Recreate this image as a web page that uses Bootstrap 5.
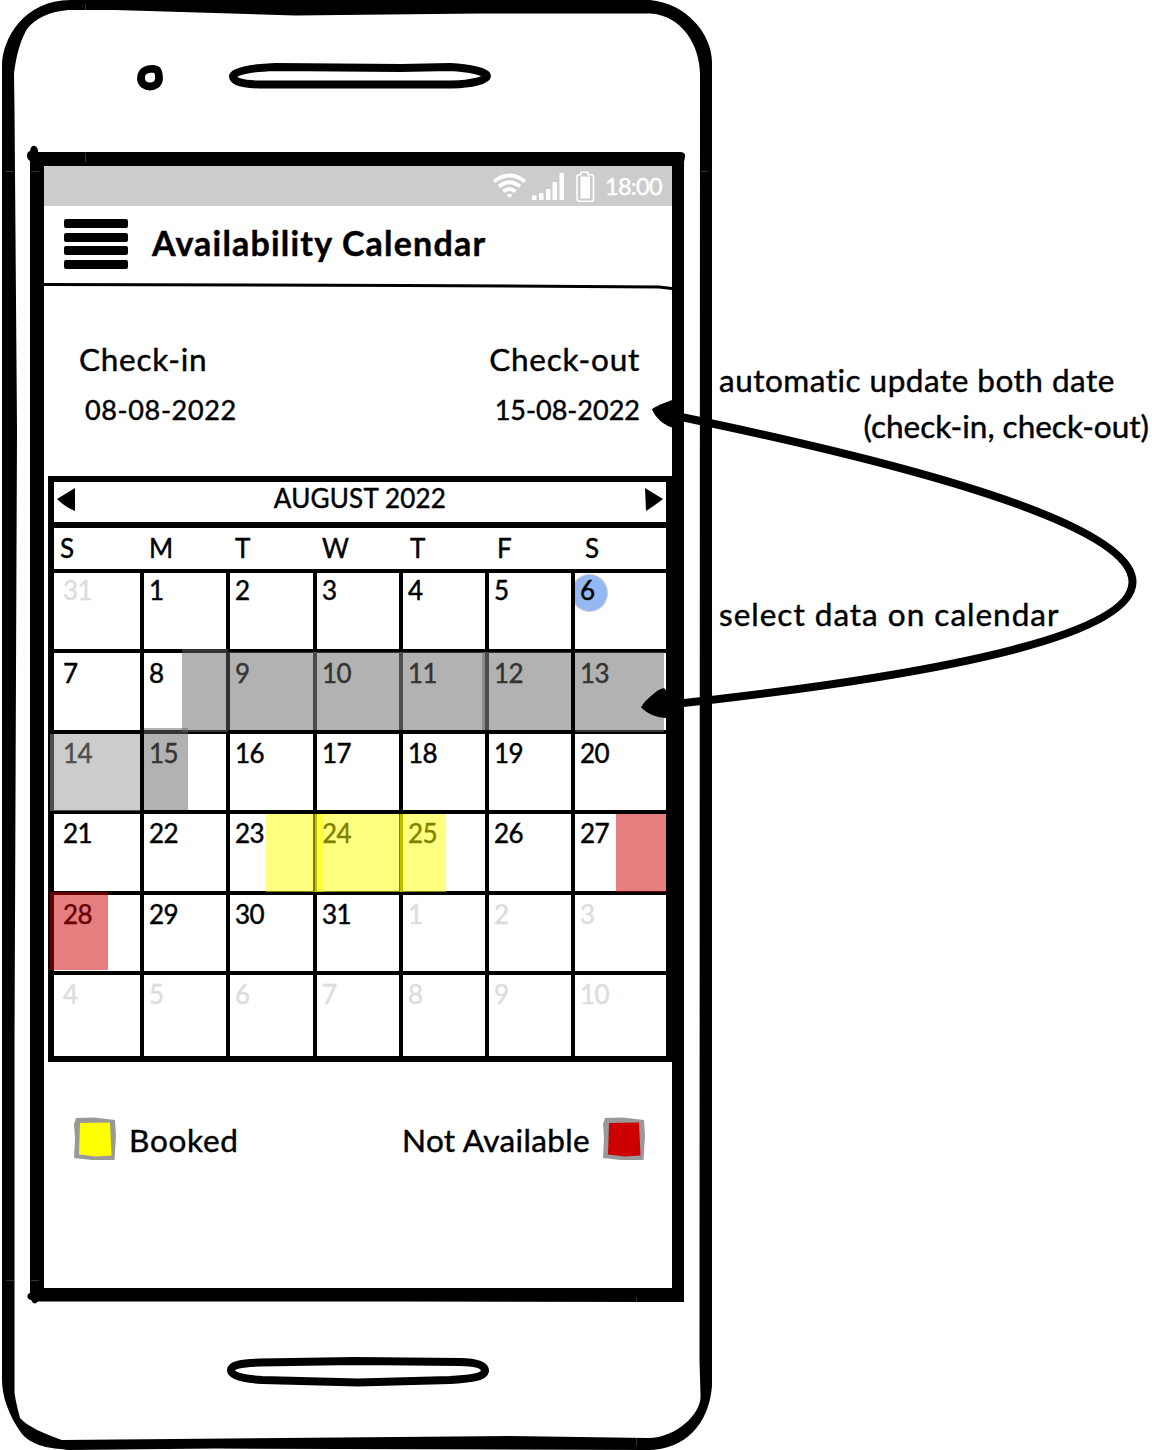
<!DOCTYPE html>
<html lang="en">
<head>
<meta charset="utf-8">
<meta name="viewport" content="width=device-width, initial-scale=1">
<title>Availability Calendar</title>
<link href="https://cdn.jsdelivr.net/npm/bootstrap@5.3.0/dist/css/bootstrap.min.css" rel="stylesheet">
<style>
  body { font-family: Lato, "Open Sans", sans-serif; color: #000; background: #fff; overflow: hidden; font-variant-ligatures: none; -webkit-text-stroke: .45px currentColor; }
  .stage { width: 1152px; height: 1450px; }
  .outline-art, .arrow-art { left: 0; top: 0; pointer-events: none; }
  .phone { width: 712px; height: 1450px; padding: 166px 40px 162px 44px; }
  .screen { height: 1122px; }
  .statusbar { height: 40px; background: #ccc; color: #fff; padding-right: 11px; }
  .clock { font-size: 23.5px; line-height: 40px; margin-left: 10px; width: 56px; letter-spacing: -.7px; }
  .titlebar { height: 118px; padding: 13px 0 0 20px; }
  .menu-bars { width: 64px; height: 50px; margin-right: 24px; }
  .menu-bars span { height: 8.8px; border-radius: 2px; background: #000; }
  .title-text { font-size: 34px; font-weight: 700; line-height: 48px; margin: 0; letter-spacing: 1.2px; }
  .txt { font-size: 31.5px; line-height: 40px; white-space: nowrap; letter-spacing: .75px; }
  .date-text { font-size: 27px; line-height: 40px; white-space: nowrap; }
  .date-in { letter-spacing: .65px; padding-left: 6px; }
  .stay { height: 152px; padding: 15px 32px 0 35px; }
  .stay .date-text { margin-top: 11px; }
  .cal { width: 624px; height: 586px; margin-left: 4px; border: 6px solid #000; background: #000; font-size: 26px; }
  .cal-head { height: 40px; background: #fff; padding: 0 3px; }
  .cal-head svg { margin-bottom: 4px; }
  .cal-head .month { line-height: 32px; height: 40px; white-space: nowrap; letter-spacing: .2px; }
  .weekdays { height: 41px; margin-top: 6px; background: #fff; line-height: 40px; }
  .cols { display: grid; grid-template-columns: 86px 82px 83px 82px 82px 82px 91px; column-gap: 4px; }
  .weekdays > div { padding-left: 5px; }
  .weekdays > div:first-child { padding-left: 6px; }
  .weekdays > div:nth-child(5) { padding-left: 7px; }
  .weekdays > div:nth-child(6) { padding-left: 8px; }
  .weekdays > div:nth-child(7) { padding-left: 10px; }
  .days { margin-top: 4px; grid-template-rows: 76px 77px 76px 77px 76px 81px; row-gap: 4px; }
  .days > div { background: #fff; padding-left: 5px; line-height: 38px; position: relative; letter-spacing: -.5px; }
  .days > div:nth-child(7n+1) { padding-left: 9px; }
  .days > div:nth-child(-n+7) { line-height: 34px; }
  .days > div:nth-child(n+8):nth-child(-n+14) { line-height: 40px; }
  .days > .off { color: #ddd; }
  .today { overflow: hidden; }
  .today::before { content: ""; position: absolute; left: -4px; top: 1px; width: 37px; height: 38px; border: 1.5px solid #ccc; border-radius: 50%; background: #94b9f2; }
  .today span { position: relative; }
  .span-mark { position: absolute; opacity: .5; left: var(--x); top: var(--y); width: var(--w); height: var(--h); }
  .g6 { background: #666; } .g9 { background: #999; } .yl { background: #ff0; } .rd { background: #c00; }
  .legend { height: 44px; margin: 54px 26px 0 30px; }
  .legend .txt { padding-top: 3px; }
  .booked { padding-left: 4px; }
  .notav { letter-spacing: .35px; padding-right: 5px; }
  .notes { padding: 360px 0 0 7px; width: 440px; }
  .note-a { letter-spacing: .5px; }
  .note-b { letter-spacing: 0; padding: 6px 3px 0 0; }
  .note-c { letter-spacing: 1px; margin-top: 148px; }
</style>
</head>
<body>
<div class="stage position-relative d-flex">
  <svg class="outline-art position-absolute" width="712" height="1450" viewBox="0 0 712 1450">
    <path fill-rule="evenodd" d="M2 66C2 38 25 0 70 0H650C686 3 712 34 712 62V1386C709 1424 685 1450 648 1450L215 1448.500L68 1450C56 1448 36 1449 22 1434C8 1415 2 1395 2 1380ZM14 74C17 50 22 38 27 29C36 18 48 12 68 10H115L295 15.500L480 13.500H650C682 15 700 46 700 74L699.500 1360L700.500 1395C702 1412 678 1438 648 1438L510 1436L340 1437.500L62 1440C45 1434 28 1427 20 1418C18 1410 16 1403 14.500 1393L14.500 1040L17 430L14.500 110Z"/>
    <path fill-rule="evenodd" d="M30 152H680Q686 152 685 157L684 162V1302H660L400 1301.500H38Q34 1306 31 1300Q26 1299 28 1294L30 1293V161Q25 158 28 152L30 151Q31 145 35 146Q38 147 38 152ZM44 166V1288H672V166Z"/>
    <path d="M150 69C142 70 141 74 141 79C142 89 158 89 159 79C159 70 157 68 150 69Z" fill="none" stroke="#000" stroke-width="7.800"/>
    <path d="M275 67L401 68L450 67C470 68 487 72 487 76C487 80 472 84 452 84.500H260C240 84.500 233 81 233 76C234 71 250 68 275 67Z" fill="none" stroke="#000" stroke-width="8"/>
    <path d="M260 1362.500L355 1361L460 1362C477 1362.500 485 1365 485 1371C484 1377 470 1379 450 1380L358 1382.500L262 1380C243 1379 231 1376 231 1370C231 1365 241 1363 260 1362.500Z" fill="none" stroke="#000" stroke-width="8"/>
    <path stroke="#555" stroke-width=".6" d="M6 171.500H14M31 171.500H39M701 171.500H708M6 1280.500H14M31 1280.500H39M85.500 4V10M85.500 153V162M636.500 1297V1302M636.500 1438V1446"/>
  </svg>

  <main class="phone flex-shrink-0">
    <div class="screen d-flex flex-column position-relative">
      <div class="statusbar d-flex align-items-center justify-content-end">
        <svg width="103" height="40" viewBox="0 0 103 40" fill="none">
          <g stroke="#fff" stroke-width="4"><path d="M2 15.500Q17.500 3.500 33 15.500"/><path d="M7 20.500Q17.500 12 28 20.500"/><path d="M11.500 25.500Q17.500 20.500 23.500 25.500"/></g>
          <path d="M14.500 29Q17.500 26.500 20.500 29L17.500 32Z" fill="#fff"/>
          <path d="M40 29.500h4.500V34H40zM47 27h4.500v7H47zM54 23h4.500v11H54zM60.500 16H65v18h-4.500zM67.500 7H72v27h-4.500z" fill="#fff"/>
          <path d="M86 8.500h3.500V6h7v2.500H100q2 0 2 2v22.500q0 2-2 2H88q-2.500 0-2.500-2V10.500q0-2 2-2z" transform="translate(-.5 .2)" stroke="#fff" stroke-width="1.600"/>
          <path d="M88.500 10.500h9.500v22h-9.500z" fill="#fff"/>
        </svg>
        <span class="clock">18:00</span>
      </div>
      <header class="titlebar d-flex align-items-start">
        <div class="menu-bars d-flex flex-column justify-content-between"><span></span><span></span><span></span><span></span></div>
        <h1 class="title-text">Availability Calendar</h1>
      </header>
      <section class="stay d-flex justify-content-between">
        <div><div class="txt">Check-in</div><div class="date-text date-in">08-08-2022</div></div>
        <div class="text-end"><div class="txt">Check-out</div><div class="date-text">15-08-2022</div></div>
      </section>
      <section class="cal position-relative flex-shrink-0">
        <div class="cal-head d-flex justify-content-between align-items-center">
          <svg width="18" height="24"><path d="M0 11L18 0V23Q8 19 0 11Z"/></svg>
          <span class="month">AUGUST 2022</span>
          <svg width="18" height="24"><path d="M18 11L0 0L1 23Q9 18 18 11Z"/></svg>
        </div>
        <div class="weekdays cols"><div>S</div><div>M</div><div>T</div><div>W</div><div>T</div><div>F</div><div>S</div></div>
        <div class="days cols">
          <div class="off">31</div><div>1</div><div>2</div><div>3</div><div>4</div><div>5</div><div class="today"><span>6</span></div>
          <div>7</div><div>8</div><div>9</div><div>10</div><div>11</div><div>12</div><div>13</div>
          <div>14</div><div>15</div><div>16</div><div>17</div><div>18</div><div>19</div><div>20</div>
          <div>21</div><div>22</div><div>23</div><div>24</div><div>25</div><div>26</div><div>27</div>
          <div>28</div><div>29</div><div>30</div><div>31</div><div class="off">1</div><div class="off">2</div><div class="off">3</div>
          <div class="off">4</div><div class="off">5</div><div class="off">6</div><div class="off">7</div><div class="off">8</div><div class="off">9</div><div class="off">10</div>
        </div>
        <i class="span-mark g6" style="--x:128px;--y:167px;--w:46px;--h:83px"></i>
        <i class="span-mark g6" style="--x:174px;--y:170px;--w:89px;--h:78px"></i>
        <i class="span-mark g6" style="--x:259px;--y:170px;--w:90px;--h:78px"></i>
        <i class="span-mark g6" style="--x:345px;--y:170px;--w:90px;--h:78px"></i>
        <i class="span-mark g6" style="--x:428px;--y:170px;--w:89px;--h:78px"></i>
        <i class="span-mark g6" style="--x:521px;--y:170px;--w:89px;--h:80px"></i>
        <i class="span-mark g9" style="--x:-4px;--y:252px;--w:90px;--h:77px"></i>
        <i class="span-mark g6" style="--x:90px;--y:246px;--w:44px;--h:82px"></i>
        <i class="span-mark yl" style="--x:212px;--y:332px;--w:58px;--h:78px"></i>
        <i class="span-mark yl" style="--x:261px;--y:332px;--w:88px;--h:78px"></i>
        <i class="span-mark yl" style="--x:346px;--y:332px;--w:46px;--h:78px"></i>
        <i class="span-mark rd" style="--x:562px;--y:332px;--w:50px;--h:78px"></i>
        <i class="span-mark rd" style="--x:-4px;--y:410px;--w:58px;--h:78px"></i>
      </section>
      <footer class="legend d-flex justify-content-between align-items-center">
        <div class="d-flex align-items-center gap-2">
          <svg width="43" height="44"><path d="M2 2L20 1.500L41 4L42 20L40.500 44L22 44.500L0 42L1 22L0 8Z" fill="#999"/><path d="M6 7L36 6.500L37.500 39.500L22 40.500L5 38.500Z" fill="#ff0"/></svg>
          <span class="txt booked">Booked</span>
        </div>
        <div class="d-flex align-items-center gap-2">
          <span class="txt notav">Not Available</span>
          <svg width="43" height="44"><path d="M2 2L20 1.500L41 4L42 20L40.500 44L22 44.500L0 42L1 22L0 8Z" fill="#999"/><path d="M6 7L36 6.500L37.500 39.500L22 40.500L5 38.500Z" fill="#c00"/></svg>
        </div>
      </footer>
      <svg class="outline-art position-absolute" width="628" height="130" viewBox="0 0 628 130"><path d="M0 118.500L360 119.500L615 121L628 122.500" fill="none" stroke="#000" stroke-width="3"/></svg>
    </div>
  </main>

  <aside class="notes d-flex flex-column">
    <div class="txt note-a">automatic update both date</div>
    <div class="txt note-b text-end">(check-in, check-out)</div>
    <div class="txt note-c">select data on calendar</div>
  </aside>

  <svg class="arrow-art position-absolute" width="1152" height="1450" viewBox="0 0 1152 1450">
    <path d="M664 413.500Q1603 605 660 705.500" fill="none" stroke="#000" stroke-width="8"/>
    <path d="M652 409.500Q653 407 672 400L682 397V430Q660 427 652 409.500Z"/>
    <path d="M641 707.500Q643 702 657 691Q666 685 666 692L672 700V714L666 718Q652 718 641 707.500Z"/>
  </svg>
</div>
<script src="https://cdn.jsdelivr.net/npm/bootstrap@5.3.0/dist/js/bootstrap.bundle.min.js"></script>
</body>
</html>
